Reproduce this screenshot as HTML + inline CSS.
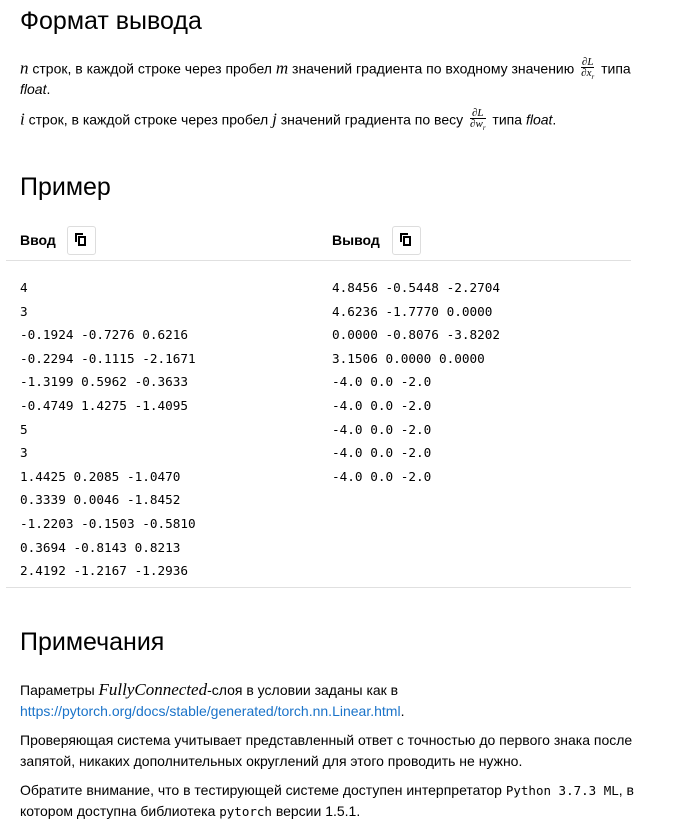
<!DOCTYPE html>
<html><head><meta charset="utf-8"><style>
body{margin:0;width:673px;height:837px;background:#fff;font-family:"Liberation Sans",sans-serif;color:#000;position:relative;overflow:hidden}
.a{position:absolute;white-space:nowrap}
h2{position:absolute;margin:0;font-weight:normal;font-size:25px;left:20px}
.p{font-size:14px;left:20px}
.m{font-family:"Liberation Serif",serif;font-style:italic;font-size:17px}
.fr{display:inline-block;vertical-align:middle;text-align:center;font-family:"Liberation Serif",serif;font-style:italic;font-size:11px;line-height:10px;margin:0 3px}
.fr span{display:block}
.fr span:first-child{border-bottom:1px solid #000}
.code{font-family:"DejaVu Sans Mono","Liberation Mono",monospace;font-size:12.7px;line-height:23.6px;position:absolute;white-space:pre}
.lbl{font-weight:bold;font-size:14px}
.btn{position:absolute;width:29px;height:29px;border:1px solid #ddd;border-radius:3px;box-sizing:border-box}
.hr{position:absolute;height:1px;background:#e0e0e0;left:6px;width:625px}
code{font-family:"DejaVu Sans Mono","Liberation Mono",monospace;font-size:12.5px}
</style></head><body>
<h2 style="top:7px">Формат вывода</h2>
<div class="a p" style="top:57px"><span class="m">n</span> строк, в каждой строке через пробел <span class="m">m</span> значений градиента по входному значению <span class="fr"><span>∂L</span><span>∂x<sub style="font-size:7px">r</sub></span></span> типа</div>
<div class="a p" style="top:81px"><i>float</i>.</div>
<div class="a p" style="top:108px"><span class="m">i</span> строк, в каждой строке через пробел <span class="m">j</span> значений градиента по весу <span class="fr"><span>∂L</span><span>∂w<sub style="font-size:7px">r</sub></span></span> типа <i>float</i>.</div>
<h2 style="top:173px">Пример</h2>
<div class="a lbl" style="left:20px;top:232px">Ввод</div>
<div class="btn" style="left:67px;top:226px"><svg width="27" height="27"><rect x="11" y="10" width="6" height="8" fill="none" stroke="#000" stroke-width="2"/><path d="M8 15V7h7" fill="none" stroke="#000" stroke-width="2"/></svg></div>
<div class="a lbl" style="left:332px;top:232px">Вывод</div>
<div class="btn" style="left:392px;top:226px"><svg width="27" height="27"><rect x="11" y="10" width="6" height="8" fill="none" stroke="#000" stroke-width="2"/><path d="M8 15V7h7" fill="none" stroke="#000" stroke-width="2"/></svg></div>
<div class="hr" style="top:260px"></div>
<div class="code" style="left:20px;top:276px">4
3
-0.1924 -0.7276 0.6216
-0.2294 -0.1115 -2.1671
-1.3199 0.5962 -0.3633
-0.4749 1.4275 -1.4095
5
3
1.4425 0.2085 -1.0470
0.3339 0.0046 -1.8452
-1.2203 -0.1503 -0.5810
0.3694 -0.8143 0.8213
2.4192 -1.2167 -1.2936</div>
<div class="code" style="left:332px;top:276px">4.8456 -0.5448 -2.2704
4.6236 -1.7770 0.0000
0.0000 -0.8076 -3.8202
3.1506 0.0000 0.0000
-4.0 0.0 -2.0
-4.0 0.0 -2.0
-4.0 0.0 -2.0
-4.0 0.0 -2.0
-4.0 0.0 -2.0</div>
<div class="hr" style="top:587px"></div>
<h2 style="top:628px">Примечания</h2>
<div class="a p" style="top:680px">Параметры <span class="m">FullyConnected</span>-слоя в условии заданы как в</div>
<div class="a p" style="top:703px"><span style="color:#1a73c9">https://pytorch.org/docs/stable/generated/torch.nn.Linear.html</span>.</div>
<div class="a p" style="top:732px">Проверяющая система учитывает представленный ответ с точностью до первого знака после</div>
<div class="a p" style="top:753px">запятой, никаких дополнительных округлений для этого проводить не нужно.</div>
<div class="a p" style="top:782px">Обратите внимание, что в тестирующей системе доступен интерпретатор <code>Python 3.7.3 ML</code>, в</div>
<div class="a p" style="top:803px">котором доступна библиотека <code>pytorch</code> версии 1.5.1.</div>
</body></html>
